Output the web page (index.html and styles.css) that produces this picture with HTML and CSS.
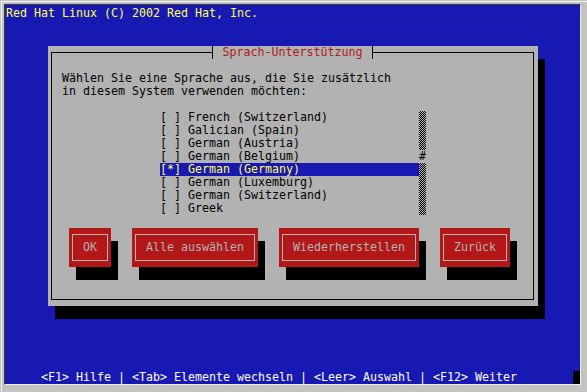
FILE: index.html
```html
<!DOCTYPE html>
<html lang="de">
<head>
    <meta charset="UTF-8">
    <title>Sprach-Unterstützung</title>
    <link rel="stylesheet" href="styles.css">
</head>
<body>
    <div class="window">
        <div class="screen">
            <div class="banner">Red Hat Linux (C) 2002 Red Hat, Inc.</div>

            <div class="dialog">
                <div class="frame">
                    <div class="title">Sprach-Unterstützung</div>
                    <p class="prompt">Wählen Sie eine Sprache aus, die Sie zusätzlich<br>in diesem System verwenden möchten:</p>

                    <div class="listbox">
                        <ul class="items">
                            <li>[ ] French (Switzerland)</li>
                            <li>[ ] Galician (Spain)</li>
                            <li>[ ] German (Austria)</li>
                            <li>[ ] German (Belgium)</li>
                            <li class="current">[*] German (Germany)</li>
                            <li>[ ] German (Luxemburg)</li>
                            <li>[ ] German (Switzerland)</li>
                            <li>[ ] Greek</li>
                        </ul>
                        <div class="scrollbar">
                            <span class="track track-top"></span>
                            <span class="thumb">#</span>
                            <span class="track track-bottom"></span>
                        </div>
                    </div>

                    <div class="buttons">
                        <button class="btn"><span>OK</span></button>
                        <button class="btn"><span>Alle auswählen</span></button>
                        <button class="btn"><span>Wiederherstellen</span></button>
                        <button class="btn"><span>Zurück</span></button>
                    </div>
                </div>
            </div>

            <div class="hints">
                <span class="keys">&lt;F1&gt; Hilfe | &lt;Tab&gt; Elemente wechseln | &lt;Leer&gt; Auswahl | &lt;F12&gt; Weiter</span>
                <span class="cursor"></span>
            </div>
        </div>
    </div>
</body>
</html>
```

FILE: styles.css
```css
html {
    background-color: #c3c3c3;
}
body {
    margin: 1px 0 0 1px;
    border-top: 1px solid #f4f4f4;
    border-left: 1px solid #f4f4f4;
    font-family: 'DejaVu Sans Mono', 'Liberation Mono', monospace;
    font-size: 11.63px;
    line-height: 13px;
}
.window {
    margin: 2px 6px 7px 2px;
    border: 1px solid;
    border-color: #3a3a3a #ececec #ececec #3a3a3a;
    background-color: #1818b2;
}
.screen {
    display: flex;
    flex-direction: column;
    box-sizing: border-box;
    height: 379px;
    padding: 2px 0 0 1px;
}
.banner {
    height: 13px;
    color: #ffff55;
    white-space: pre;
}
.dialog {
    display: flex;
    flex-direction: column;
    width: 490px;
    height: 260px;
    margin: 26px 0 0 42px;
    background-color: #b2b2b2;
    box-shadow: 7px 13px 0 #000;
    color: #000;
}
.frame {
    flex: 1;
    display: flex;
    flex-direction: column;
    margin: 6px 4px 6px 3px;
    border: 1px solid #000;
}
.title {
    height: 13px;
    margin: -7px auto 0;
    padding: 0 10px;
    border-left: 1px solid #000;
    border-right: 1px solid #000;
    background-color: #b2b2b2;
    color: #b21818;
    white-space: pre;
}
.prompt {
    margin: 13px 0 0;
    padding-left: 10px;
    white-space: pre;
}
.listbox {
    display: flex;
    margin: 13px 0 0 108px;
}
.items {
    list-style: none;
    margin: 0;
    padding: 0;
    width: 259px;
}
.items li {
    height: 13px;
    white-space: pre;
}
.items .current {
    background-color: #1818b2;
    color: #ffff55;
}
.scrollbar {
    display: flex;
    flex-direction: column;
    width: 7px;
}
.track {
    background: repeating-conic-gradient(#000 0 25%, #b2b2b2 0 50%) 0 0 / 2px 2px;
}
.track-top {
    height: 39px;
}
.track-bottom {
    height: 52px;
}
.thumb {
    height: 13px;
}
.buttons {
    display: flex;
    gap: 21px;
    margin-top: 13px;
    padding-left: 17px;
}
.btn {
    height: 39px;
    margin: 0;
    padding: 6px 3px;
    border: 0;
    border-radius: 0;
    background-color: #b21818;
    box-shadow: 7px 13px 0 #000;
    font: inherit;
    color: #b2b2b2;
}
.btn span {
    display: block;
    height: 100%;
    box-sizing: border-box;
    padding: 0 10px;
    border: 1px solid #b2b2b2;
    line-height: 25px;
    white-space: pre;
}
.hints {
    display: flex;
    height: 13px;
    margin-top: auto;
    padding-left: 35px;
    color: #fff;
}
.keys {
    white-space: pre;
}
.cursor {
    width: 7px;
    height: 13px;
    margin-left: auto;
    background-color: #000;
}
```
